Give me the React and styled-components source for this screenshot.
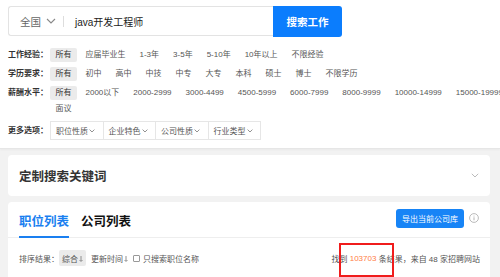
import React from "react";
import styled, { createGlobalStyle } from "styled-components";

const Global = createGlobalStyle`
  html, body { margin: 0; padding: 0; overflow: hidden; background: #f2f2f2; }
  body { font-family: "Liberation Sans", "Noto Sans CJK SC", sans-serif; color: #333; }
  * { box-sizing: border-box; }
`;

const Top = styled.div`
  background: #fff;
  padding: 6px 8px 8px;
  border-bottom: 1px solid #e6e6e6;
  box-shadow: 0 1px 2px rgba(0,0,0,0.04);
`;

const SearchBar = styled.div`
  display: flex;
  height: 30px;
  margin-bottom: 12px;
`;

const InputBox = styled.div`
  width: 265px;
  display: flex;
  align-items: center;
  border: 1px solid #e3e3e3;
  border-right: none;
  border-radius: 3px 0 0 3px;
  padding-left: 11px;
`;

const City = styled.span`
  font-size: 10.5px;
  color: #666;
  display: flex;
  align-items: center;
  gap: 5px;
`;

const Divider = styled.span`
  width: 1px;
  height: 11px;
  background: #ddd;
  margin: 0 11px 0 7px;
`;

const Query = styled.span`
  font-size: 10px;
  color: #222;
`;

const SearchButton = styled.button`
  width: 69px;
  height: 31px;
  margin-top: -0.5px;
  border: none;
  border-radius: 0 3px 3px 0;
  background: #0b7dfd;
  color: #fff;
  font-family: inherit;
  font-size: 10.5px;
  font-weight: bold;
  padding: 0;
`;

const FilterRow = styled.div`
  display: flex;
  align-items: flex-start;
  margin-bottom: 5px;
  &:last-child { margin-bottom: 0; }
`;

const Label = styled.div`
  width: 42px;
  flex: none;
  font-size: 8px;
  line-height: ${p => p.$h || 14}px;
  color: #333;
  font-weight: bold;
`;

const TagList = styled.div`
  display: flex;
  flex-wrap: wrap;
  width: 470px;
  flex: none;
  row-gap: 2px;
  column-gap: 3px;
`;

const Tag = styled.span`
  height: 14px;
  line-height: 14px;
  padding: 0 5.5px;
  font-size: 8px;
  white-space: nowrap;
  border-radius: 2px;
  color: ${p => (p.$active ? "#333" : "#555")};
  background: ${p => (p.$active ? "#ebebeb" : "transparent")};
`;

const SelectGroup = styled.div`
  display: flex;
`;

const Select = styled.div`
  width: 53.5px;
  height: 19px;
  border: 1px solid #e6e6e6;
  margin-left: -1px;
  &:first-child { margin-left: 0; }
  display: flex;
  align-items: center;
  padding-left: 5px;
  font-size: 8px;
  color: #555;
  gap: 1px;
`;

const Card = styled.div`
  background: #fff;
  margin: ${p => p.$m || "0"};
  width: 482px;
  border-radius: 4px;
  position: relative;
`;

const CardHead = styled.div`
  height: 41px;
  display: flex;
  align-items: center;
  justify-content: space-between;
  padding: 0 11px;
`;

const CardTitle = styled.div`
  font-size: 12.5px;
  font-weight: bold;
  color: #333;
`;

const TabBar = styled.div`
  display: flex;
  align-items: center;
  justify-content: space-between;
  padding: 0 11px;
  border-bottom: 1px solid #eee;
  height: 36px;
`;

const Tabs = styled.div`
  display: flex;
  gap: 12px;
  height: 100%;
`;

const Tab = styled.div`
  font-size: 12.5px;
  font-weight: bold;
  color: ${p => (p.$active ? "#1a7ff0" : "#111")};
  display: flex;
  align-items: center;
  padding-top: 2px;
  border-bottom: 2px solid ${p => (p.$active ? "#1a7ff0" : "transparent")};
  margin-bottom: -1px;
`;

const Actions = styled.div`
  display: flex;
  align-items: center;
  gap: 5px;
  margin-top: -3px;
`;

const ExportButton = styled.button`
  height: 19px;
  width: 68px;
  padding: 0;
  border: none;
  border-radius: 3px;
  background: #1784f6;
  color: #fff;
  font-family: inherit;
  font-size: 8px;
`;

const SortRow = styled.div`
  display: flex;
  align-items: center;
  justify-content: space-between;
  padding: 12px 10px 0 11px;
  font-size: 8px;
  color: #444;
`;

const SortLeft = styled.div`
  display: flex;
  align-items: center;
`;

const SortItem = styled.span`
  display: flex;
  align-items: center;
  height: 16px;
  padding: 0 ${p => (p.$active ? "3px" : "0")};
  margin-right: ${p => p.$mr || 0}px;
  border-radius: 2px;
  background: ${p => (p.$active ? "#ebebeb" : "transparent")};
  color: #555;
`;

const Check = styled.span`
  width: 7px;
  height: 7px;
  border: 1px solid #999;
  border-radius: 1px;
  margin-right: 3px;
`;

const Count = styled.span`
  color: #ff7d45;
`;

const Highlight = styled.div`
  position: absolute;
  left: 331px;
  top: 41px;
  width: 55px;
  height: 34px;
  border: 2px solid #f01c1c;
`;

const Spacer = styled.div`
  height: 40px;
`;

const Chevron = ({ size = 9, color = "#888", w = 1.2 }) => (
  <svg width={size} height={size * 0.6} viewBox="0 0 10 6">
    <path d="M1 1l4 4 4-4" fill="none" stroke={color} strokeWidth={w} />
  </svg>
);

const DownArrow = () => (
  <svg width="4" height="6" viewBox="0 0 4 6" style={{ marginLeft: 1, marginTop: 2 }}>
    <path d="M2 0v5M0.5 4L2 5.5 3.5 4" fill="none" stroke="#777" strokeWidth="0.8" />
  </svg>
);

const Info = () => (
  <svg width="10" height="10" viewBox="0 0 10 10">
    <circle cx="5" cy="5" r="4.4" fill="none" stroke="#aaa" strokeWidth="0.8" />
    <path d="M5 4.3v3" stroke="#aaa" strokeWidth="0.9" />
    <circle cx="5" cy="2.9" r="0.5" fill="#aaa" />
  </svg>
);

const rows = [
  { label: "工作经验：", items: ["所有", "应届毕业生", "1-3年", "3-5年", "5-10年", "10年以上", "不限经验"] },
  { label: "学历要求：", items: ["所有", "初中", "高中", "中技", "中专", "大专", "本科", "硕士", "博士", "不限学历"] },
  {
    label: "薪酬水平：",
    items: ["所有", "2000以下", "2000-2999", "3000-4499", "4500-5999", "6000-7999", "8000-9999", "10000-14999", "15000-19999", "面议"],
  },
];

const selects = ["职位性质", "企业特色", "公司性质", "行业类型"];

export default function App() {
  return (
    <>
      <Global />
      <Top>
        <SearchBar>
          <InputBox>
            <City>
              全国 <Chevron size={10} color="#888" w={1.1} />
            </City>
            <Divider />
            <Query>java开发工程师</Query>
          </InputBox>
          <SearchButton>搜索工作</SearchButton>
        </SearchBar>
        {rows.map(r => (
          <FilterRow key={r.label}>
            <Label>{r.label}</Label>
            <TagList>
              {r.items.map((t, i) => (
                <Tag key={t} $active={i === 0}>
                  {t}
                </Tag>
              ))}
            </TagList>
          </FilterRow>
        ))}
        <FilterRow>
          <Label $h={19}>更多选项：</Label>
          <SelectGroup>
            {selects.map(s => (
              <Select key={s}>
                {s}
                <Chevron size={6} color="#666" w={1.2} />
              </Select>
            ))}
          </SelectGroup>
        </FilterRow>
      </Top>
      <Card $m="6px 0 0 8px">
        <CardHead>
          <CardTitle>定制搜索关键词</CardTitle>
          <Chevron size={8} color="#aaa" w={1} />
        </CardHead>
      </Card>
      <Card $m="6px 0 0 8px">
        <TabBar>
          <Tabs>
            <Tab $active>职位列表</Tab>
            <Tab>公司列表</Tab>
          </Tabs>
          <Actions>
            <ExportButton>导出当前公司库</ExportButton>
            <Info />
          </Actions>
        </TabBar>
        <SortRow>
          <SortLeft>
            <SortItem>排序结果：</SortItem>
            <SortItem $active $mr={5}>
              综合<DownArrow />
            </SortItem>
            <SortItem $mr={5}>
              更新时间<DownArrow />
            </SortItem>
            <Check />
            <SortItem>只搜索职位名称</SortItem>
          </SortLeft>
          <SortItem>
            找到&nbsp;<Count>103703</Count>&nbsp;条结果，来自 48 家招聘网站
          </SortItem>
        </SortRow>
        <Highlight />
        <Spacer />
      </Card>
    </>
  );
}
